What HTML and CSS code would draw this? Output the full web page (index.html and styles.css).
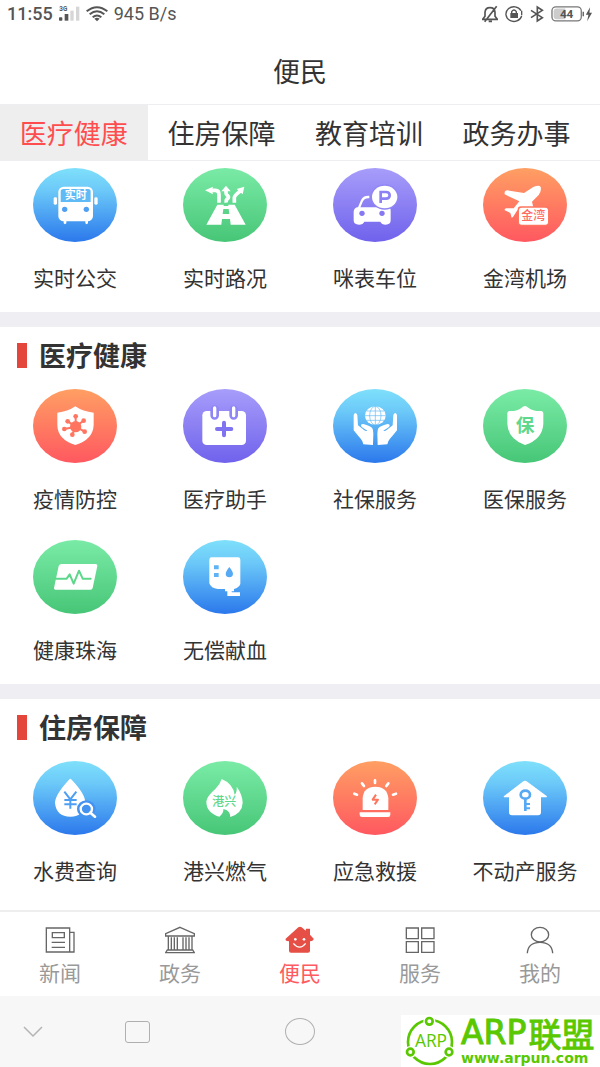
FILE: index.html
```html
<!DOCTYPE html>
<html lang="zh-CN">
<head>
<meta charset="utf-8">
<meta name="viewport" content="width=device-width, initial-scale=1">
<title>便民</title>
<link rel="stylesheet" href="styles.css">
</head>
<body>
<div class="page">
  <div class="status">
    <div class="status-group">
      <b class="clock">11:55</b>
      <svg class="signal" viewBox="0 0 63 48" aria-hidden="true">
        <text class="signal-type" x="1" y="14">3G</text>
        <g fill="#555"><rect x="0" y="34" width="10" height="10" rx="2"/><rect x="17" y="24" width="11" height="20"/></g>
        <g fill="#d6d6d6"><rect x="34" y="14" width="10" height="30"/><rect x="51" y="2" width="10" height="42"/></g>
      </svg>
      <svg class="wifi" viewBox="0 0 66 48" fill="none" stroke="#555" stroke-width="6" aria-hidden="true">
        <path d="M2 16Q33-9 64 16M11 25Q33 7 55 25M20 34Q33 23 46 34"/><path d="M25 38Q33 32 41 38L33 46Z" fill="#555" stroke="none"/>
      </svg>
      <span>945 B/s</span>
    </div>
    <div class="status-group status-right">
      <svg class="s-icon bell" viewBox="0 0 48 54" fill="none" stroke="#555" stroke-width="5" aria-hidden="true">
        <path d="M2 43H46L39 34V22Q38 8 24 8T9 22V34ZM20 49H30M44 4L8 50"/>
      </svg>
      <svg class="s-icon" viewBox="0 0 54 54" fill="none" stroke="#555" stroke-width="4" aria-hidden="true">
        <path d="M50 33A24 22 0 1 1 48 17M40 45A24 22 0 0 1 30 49M50 17V31"/><rect x="16" y="24" width="23" height="15" fill="#555" stroke="none"/><path d="M20 25V20Q27 10 34 20V25"/>
      </svg>
      <svg class="s-icon bluetooth" viewBox="0 0 42 54" fill="none" stroke="#555" stroke-width="5" aria-hidden="true">
        <path d="M3 16L37 38L22 48V6L37 16L3 38"/>
      </svg>
      <svg class="battery" viewBox="0 0 129 48" aria-hidden="true">
        <rect x="3" y="2" width="90" height="43" rx="12" fill="#fff" stroke="#777" stroke-width="4"/>
        <path d="M17 7H44V40H17Q8 40 8 31V16Q8 7 17 7Z" fill="#ccc"/>
        <text class="battery-text" x="48" y="35">44</text>
        <path d="M97 17h4v14h-4zM120 3L107 26H115L111 46L126 20H118Z" fill="#555"/>
      </svg>
    </div>
  </div>

  <h1 class="title">便民</h1>

  <div class="tabs" role="tablist">
    <button class="tab tab-active" role="tab" aria-selected="true">医疗健康</button>
    <button class="tab" role="tab" aria-selected="false">住房保障</button>
    <button class="tab" role="tab" aria-selected="false">教育培训</button>
    <button class="tab" role="tab" aria-selected="false">政务办事</button>
  </div>

  <main class="content">
    <section class="section section-first">
      <div class="grid">
        <a class="item" href="#bus">
          <svg class="disc blue" viewBox="0 0 252 222" fill="#fff" aria-hidden="true">
            <rect x="76" y="56" width="104" height="104" rx="16"/><rect x="62" y="88" width="10" height="22" rx="4"/><rect x="184" y="88" width="10" height="22" rx="4"/>
            <path d="M92 156h8v10q-4 5-8 0zM157 156h8v10q-4 5-8 0z"/>
            <path d="M91 63H165Q173 63 173 71V102H83V71Q83 63 91 63Z" fill="#5fbaf6"/>
            <circle cx="95" cy="124" r="8" fill="#4f9ff2"/><circle cx="160" cy="124" r="8" fill="#4f9ff2"/>
            <text class="glyph-bold" x="128" y="94" font-size="33">实时</text>
          </svg>
          <span>实时公交</span>
        </a>
        <a class="item" href="#traffic">
          <svg class="disc green" viewBox="0 0 252 222" fill="#fff" aria-hidden="true">
            <path d="M103 110H155L188 170H143L141 153H117L115 170H70ZM121 123L119 138H139L137 123ZM122 110V114H136V110Z" fill-rule="evenodd"/>
            <path d="M66 67L90 56L87 67L90 79ZM129 53L143 70H115ZM184 56L179 79L161 63Z"/>
            <path d="M84 67H98Q108 67 108 80V104M129 68V74Q129 80 134 83Q139 88 134 92Q128 95 130 104M154 104V88Q156 80 173 68" fill="none" stroke="#fff" stroke-width="11"/>
          </svg>
          <span>实时路况</span>
        </a>
        <a class="item" href="#parking">
          <svg class="disc purple" viewBox="0 0 252 222" fill="#fff" aria-hidden="true">
            <path d="M76 124L87 98Q92 87 106 87H109" fill="none" stroke="#fff" stroke-width="7"/>
            <path d="M72 118H165Q173 118 173 128V157Q173 170 158 170Q146 170 142 161H94Q90 170 78 170Q62 170 62 157V132Q62 122 72 118Z"/>
            <circle cx="87" cy="136" r="8" fill="#8578f2"/><circle cx="147" cy="136" r="8" fill="#8578f2"/>
            <ellipse cx="155" cy="87" rx="42" ry="38" fill="#9085f5"/><ellipse cx="155" cy="87" rx="38" ry="34"/>
            <path d="M143 105V72H159Q170 72 170 82T159 92H144" fill="none" stroke="#8d82f5" stroke-width="8"/>
          </svg>
          <span>咪表车位</span>
        </a>
        <a class="item" href="#airport">
          <svg class="disc orange" viewBox="0 0 252 222" fill="#fff" aria-hidden="true">
            <path d="M151 57Q169 49 173 57Q176 69 167 81L147 101L151 118L112 118L102 128L90 147L86 149L82 135L64 126L68 121L92 121L109 100L65 79Q63 67 74 67L123 75Z"/>
            <rect x="104" y="115" width="95" height="58" rx="10" fill="#ff755f"/><rect x="108" y="119" width="87" height="51" rx="8"/>
            <text class="glyph" x="151" y="157" font-size="36" fill="#ff6c61">金湾</text>
          </svg>
          <span>金湾机场</span>
        </a>
      </div>
    </section>

    <section class="section">
      <h2 class="heading">医疗健康</h2>
      <div class="grid">
        <a class="item" href="#epidemic">
          <svg class="disc orange" viewBox="0 0 252 222" fill="#fff" aria-hidden="true">
            <path d="M127 52Q150 68 182 71V108Q180 152 127 168Q74 152 73 108V71Q104 68 127 52Z"/>
            <g fill="#ff7560" stroke="#ff7560" stroke-width="6"><circle cx="128" cy="113" r="14"/>
            <path d="M128 113V81M128 113L151 95M128 113L155 128M128 113L118 137M128 113L94 120M128 113L104 97"/></g>
            <g fill="#ff7560"><circle cx="128" cy="82" r="7"/><circle cx="152" cy="95" r="7"/><circle cx="155" cy="128" r="7"/><circle cx="118" cy="137" r="7"/><circle cx="94" cy="120" r="7"/><circle cx="104" cy="97" r="7"/></g>
          </svg>
          <span>疫情防控</span>
        </a>
        <a class="item" href="#assistant">
          <svg class="disc purple" viewBox="0 0 252 222" fill="#fff" aria-hidden="true">
            <rect x="58" y="66" width="131" height="102" rx="13"/>
            <path d="M95 62V79M152 62V79" stroke="#9085f5" stroke-width="26" stroke-linecap="round"/>
            <path d="M95 57V80M152 57V80" stroke="#fff" stroke-width="10" stroke-linecap="round"/>
            <path d="M123 101V139M102 120H145" stroke="#8073f1" stroke-width="12" stroke-linecap="round"/>
          </svg>
          <span>医疗助手</span>
        </a>
        <a class="item" href="#social">
          <svg class="disc blue" viewBox="0 0 252 222" fill="#fff" aria-hidden="true">
            <ellipse cx="127" cy="80" rx="31" ry="28"/>
            <g fill="none" stroke="#62baf6" stroke-width="2"><path d="M127 52V108M96 80H158M101 66H153M101 94H153"/><ellipse cx="127" cy="80" rx="17" ry="28"/></g>
            <path id="hand" d="M62 78Q67 66 73 78L75 109L94 124Q99 128 103 125L86 114Q80 105 91 105Q112 110 118 118Q121 123 121 134L120 168L91 166Q88 154 82 148Q73 138 62 124Z"/>
            <use href="#hand" transform="translate(254) scale(-1 1)"/>
          </svg>
          <span>社保服务</span>
        </a>
        <a class="item" href="#insurance">
          <svg class="disc green" viewBox="0 0 252 222" fill="#fff" aria-hidden="true">
            <path d="M116 56Q126 46 136 56Q150 67 174 66Q181 66 181 74V104Q179 150 126 168Q75 150 73 104V74Q73 66 80 66Q102 67 116 56Z"/>
            <text class="glyph-bold" x="126" y="130" font-size="56" fill="#5fd88c">保</text>
          </svg>
          <span>医保服务</span>
        </a>
        <a class="item" href="#health">
          <svg class="disc green" viewBox="0 0 252 222" fill="#fff" aria-hidden="true">
            <path d="M86 72H188Q194 72 193 78L179 144Q178 149 172 149H68Q62 149 63 144L77 78Q79 72 86 72Z"/>
            <path d="M69 116H101L110 103L122 131L138 92L149 116H173" fill="none" stroke="#5dd78a" stroke-width="6" stroke-linejoin="round" stroke-linecap="round"/>
          </svg>
          <span>健康珠海</span>
        </a>
        <a class="item" href="#blood">
          <svg class="disc blue" viewBox="0 0 252 222" fill="#fff" aria-hidden="true">
            <path d="M86 52H165Q172 52 172 59V132Q168 143 153 147V154H146V157H171V168H133V154H126V147H104Q84 145 79 130V59Q79 52 86 52Z"/>
            <path d="M93 76h14v12h-14zM93 99h14v12h-14z" fill="#5cb3f5"/>
            <path d="M139 81Q150 95 150 102Q149 112 139 112T128 102Q128 95 139 81Z" fill="#56aaf4"/>
          </svg>
          <span>无偿献血</span>
        </a>
      </div>
    </section>

    <section class="section">
      <h2 class="heading">住房保障</h2>
      <div class="grid">
        <a class="item" href="#water">
          <svg class="disc blue" viewBox="0 0 252 222" fill="#fff" aria-hidden="true">
            <path d="M108 56Q112 50 116 56Q158 100 157 126Q154 167 112 167T66 126Q66 101 108 56Z"/>
            <path d="M94 92L112 115L130 92M112 115V143M94 117H131M94 130H131" fill="none" stroke="#4c9ff2" stroke-width="6"/>
            <ellipse cx="160" cy="144" rx="28" ry="26" fill="#4593f0"/>
            <path d="M172 155L186 167" stroke="#fff" stroke-width="8" stroke-linecap="round"/>
            <ellipse cx="160" cy="144" rx="17" ry="16" fill="none" stroke="#fff" stroke-width="7"/>
          </svg>
          <span>水费查询</span>
        </a>
        <a class="item" href="#gas">
          <svg class="disc green" viewBox="0 0 252 222" fill="#fff" aria-hidden="true">
            <path d="M116 54Q150 68 155 101Q163 93 161 77Q178 100 179 125Q178 156 142 168Q142 149 121 144Q123 155 109 167Q70 155 70 122Q72 105 97 84Q111 71 116 54Z"/>
            <text class="glyph" x="124" y="135" font-size="36" fill="#5fd88c">港兴</text>
          </svg>
          <span>港兴燃气</span>
        </a>
        <a class="item" href="#emergency">
          <svg class="disc orange" viewBox="0 0 252 222" fill="#fff" aria-hidden="true">
            <path d="M89 147V112Q91 77 127 77T166 112V147Z"/><path d="M80 154H172V161Q172 168 165 168H87Q80 168 80 161Z"/>
            <path d="M126 58V66M87 67L93 75M166 67L160 75M64 98L72 101M189 98L180 101" stroke="#fff" stroke-width="8" stroke-linecap="round"/>
            <path d="M129 101L119 116H135L125 130" fill="none" stroke="#ff765f" stroke-width="6" stroke-linejoin="round"/>
          </svg>
          <span>应急救援</span>
        </a>
        <a class="item" href="#realty">
          <svg class="disc blue" viewBox="0 0 252 222" fill="#fff" aria-hidden="true">
            <path d="M119 62Q126 56 133 62L191 105Q193 109 188 109H174V154Q174 163 165 163H87Q78 163 78 154V109H66Q60 109 63 105Z"/>
            <g fill="none" stroke="#57a9f4" stroke-width="8"><ellipse cx="127" cy="101" rx="14" ry="12"/><path d="M127 112V150"/><path d="M127 129H141M127 142H141" stroke-width="6"/></g>
          </svg>
          <span>不动产服务</span>
        </a>
      </div>
    </section>
  </main>

  <nav class="nav">
    <button class="nav-item">
      <svg viewBox="0 0 90 84" fill="none" stroke="#666" stroke-width="4" aria-hidden="true"><path d="M4 6H74V78H4ZM74 19H87V78H74M22 20H58V35H22ZM20 49H60M20 64H60"/></svg>
      <span>新闻</span>
    </button>
    <button class="nav-item">
      <svg viewBox="0 0 90 84" fill="none" stroke="#666" stroke-width="4" aria-hidden="true"><path d="M45 4L88 23V30H2V23ZM10 30V70M19 34V70M28 34V70M37 34V70M54 34V70M63 34V70M72 34V70M81 30V70M7 72H83L88 80H2Z"/></svg>
      <span>政务</span>
    </button>
    <button class="nav-item nav-active" aria-current="page">
      <svg viewBox="0 0 90 84" aria-hidden="true"><path d="M2 38L40 4Q45 0 50 4L62 14L63 8H75V26L86 38Q86 44 75 46V74Q75 80 69 80H18Q12 80 12 74V46L5 45Q0 42 2 38Z" fill="#e54f45"/><circle cx="31" cy="40" r="4" fill="#fff"/><circle cx="57" cy="40" r="4" fill="#fff"/><path d="M25 52Q44 75 62 52" fill="none" stroke="#fff" stroke-width="4"/></svg>
      <span>便民</span>
    </button>
    <button class="nav-item">
      <svg viewBox="0 0 90 84" fill="none" stroke="#666" stroke-width="4" aria-hidden="true"><path d="M4 6H40V38H4ZM50 6H87V38H50ZM4 47H40V79H4ZM50 47H87V79H50Z"/></svg>
      <span>服务</span>
    </button>
    <button class="nav-item">
      <svg viewBox="0 0 90 84" fill="none" stroke="#666" stroke-width="4" aria-hidden="true"><ellipse cx="45" cy="26" rx="26" ry="22"/><path d="M7 82Q9 49 45 49T83 82"/></svg>
      <span>我的</span>
    </button>
  </nav>

  <div class="system">
    <button class="system-key" aria-label="收起"><svg class="chevron" viewBox="0 0 20 12" fill="none" stroke="#b4b4b4"><path d="M1 1L10 10L19 1"/></svg></button>
    <button class="system-key" aria-label="最近任务"><span class="square"></span></button>
    <button class="system-key" aria-label="主屏幕"><span class="round"></span></button>
  </div>

  <div class="mark">
    <svg class="mark-logo" viewBox="0 0 150 150" aria-hidden="true">
      <circle cx="75" cy="78" r="66" fill="none" stroke="#5ac800" stroke-width="8"/>
      <g fill="#fff"><circle cx="73" cy="16" r="18"/><circle cx="16" cy="108" r="18"/><circle cx="132" cy="108" r="18"/></g>
      <g fill="#fff" stroke="#5ac800" stroke-width="8"><circle cx="73" cy="16" r="10"/><circle cx="16" cy="108" r="10"/><circle cx="132" cy="108" r="10"/></g>
      <text class="mark-arp" x="78" y="94">ARP</text>
    </svg>
    <div class="mark-text">
      <div class="mark-name"><span>ARP</span><span class="mark-cjk">联盟</span></div>
      <div class="mark-url">www.arpun.com</div>
    </div>
  </div>
</div>
</body>
</html>
```
FILE: styles.css
```css
* { box-sizing: border-box; }

body {
  margin: 0;
  background: #fff;
  color: #333;
  font-family: "Noto Sans CJK SC", sans-serif;
}

button {
  border: 0;
  padding: 0;
  background: none;
  color: inherit;
  font: inherit;
}

a { color: inherit; text-decoration: none; }
svg { display: block; flex: none; }

.page {
  position: relative;
  display: flex;
  flex-direction: column;
  min-height: 100vh;
}

.status {
  display: flex;
  justify-content: space-between;
  align-items: center;
  height: 28px;
  padding: 0 7px;
  color: #555;
  font: 18px/28px Roboto, sans-serif;
}

.status-group { display: flex; align-items: center; gap: 6px; }
.status-right { gap: 7px; }
.clock { font-weight: 500; }
.signal { width: 21px; height: 16px; }
.signal-type { font: bold 19px Roboto, sans-serif; fill: #555; }
.wifi { width: 22px; height: 16px; }
.s-icon { width: 18px; height: 18px; }
.bell { width: 16px; }
.bluetooth { width: 14px; }
.battery { width: 42px; height: 16px; }
.battery-text { font: bold 36px Roboto, sans-serif; fill: #555; text-anchor: middle; }

.title {
  margin: 0;
  height: 76px;
  padding-top: 23px;
  font-size: 27px;
  line-height: 40px;
  font-weight: 400;
  text-align: center;
}

.tabs {
  display: flex;
  border-top: 1px solid #ededf2;
  border-bottom: 1px solid #ededf2;
  overflow: hidden;
}

.tab {
  flex: none;
  width: 24.6%;
  height: 55px;
  font-size: 27px;
  line-height: 55px;
  white-space: nowrap;
}

.tab-active { background: #eee; color: #ff4d4f; }

.content {
  flex: 1;
  display: flex;
  flex-direction: column;
  gap: 15px;
  background: #eeeef3;
}

.section { padding: 13px 0 20px; background: #fff; }
.section-first { padding-top: 7px; }
.section:last-child { flex: 1; }

.heading {
  display: flex;
  align-items: center;
  gap: 12px;
  margin: 0 0 19px;
  padding-left: 17px;
  font-size: 27px;
  line-height: 30px;
  font-weight: 700;
}

.heading::before {
  content: "";
  width: 10px;
  height: 25px;
  background: #e5463c;
}

.grid {
  display: grid;
  grid-template-columns: repeat(4, 1fr);
  row-gap: 27px;
}

.item {
  display: flex;
  flex-direction: column;
  align-items: center;
  gap: 20px;
  font-size: 21px;
  line-height: 30px;
  white-space: nowrap;
}

.disc { width: 84px; height: 74px; border-radius: 50%; }
.blue { background: linear-gradient(#7fe0fb, #6cc9f8 30%, #2b78ec); }
.green { background: linear-gradient(#7aeba6, #47c677); }
.purple { background: linear-gradient(#a79dfa, #7062ec); }
.orange { background: linear-gradient(#ff9f63, #ff5860); }

.glyph, .glyph-bold { font-family: "Noto Sans CJK SC", sans-serif; text-anchor: middle; }
.glyph { font-weight: 500; }
.glyph-bold { font-weight: 700; }

.nav {
  display: grid;
  grid-template-columns: repeat(5, 1fr);
  height: 86px;
  border-top: 2px solid #eee;
  background: #fff;
}

.nav-item {
  display: flex;
  flex-direction: column;
  align-items: center;
  gap: 3px;
  padding-top: 14px;
  color: #999;
  font-size: 21px;
  line-height: 30px;
}

.nav-item svg { width: 30px; height: 28px; }
.nav-active { color: #ff5a5f; }

.system {
  display: grid;
  grid-template-columns: 66fr 142fr 184fr 208fr;
  height: 71px;
  background: #f7f7f7;
}

.system-key { display: flex; align-items: center; justify-content: center; }
.chevron { width: 20px; height: 12px; stroke-width: 1.5; }
.square { width: 25px; height: 22px; border: 1px solid #b0b0b0; border-radius: 3px; }
.round { width: 30px; height: 27px; border: 1px solid #b0b0b0; border-radius: 50%; }

.mark {
  position: absolute;
  right: 0;
  bottom: 0;
  display: flex;
  align-items: center;
  gap: 6px;
  padding: 1px 4px;
  background: #fff;
  color: #5ac800;
}

.mark-logo { width: 50px; height: 50px; }
.mark-arp { font: 52px "Open Sans", sans-serif; fill: #5ac800; text-anchor: middle; }
.mark-text { width: 135px; white-space: nowrap; }
.mark-name {
  display: flex;
  gap: 2px;
  font: 33px/34px "DejaVu Sans", sans-serif;
  -webkit-text-stroke: 1px #5ac800;
}
.mark-cjk { font-family: "Noto Sans CJK SC", sans-serif; }
.mark-url { font: bold 14px/16px "DejaVu Sans", sans-serif; }
```
